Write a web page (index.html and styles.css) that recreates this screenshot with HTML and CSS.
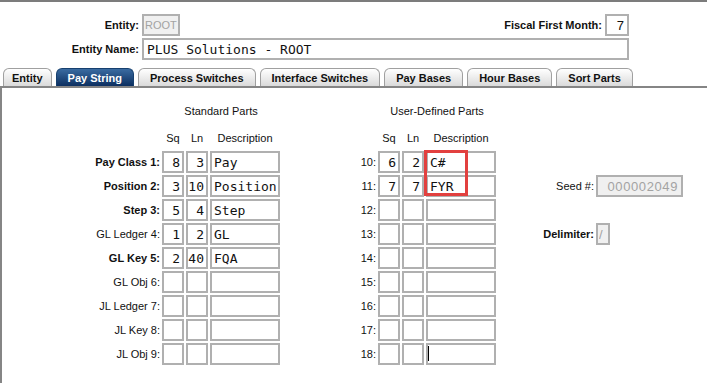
FILE: index.html
```html
<!DOCTYPE html>
<html lang="en">
<head>
    <meta charset="UTF-8">
    <title>Entity - Pay String</title>
    <link rel="stylesheet" href="styles.css">
</head>
<body>
    <!-- Entity header -->
    <div class="top">
        <div class="top-row">
            <label class="top-label">Entity:</label>
            <input type="text" class="entity-code" value="ROOT" disabled>
            <div class="fiscal">
                <label class="top-label">Fiscal First Month:</label>
                <input type="text" class="fiscal-month" value="7">
            </div>
        </div>
        <div class="top-row">
            <label class="top-label">Entity Name:</label>
            <input type="text" class="entity-name" value="PLUS Solutions - ROOT">
        </div>
    </div>

    <!-- Tabs -->
    <ul class="tabs">
        <li class="tab">Entity</li>
        <li class="tab active">Pay String</li>
        <li class="tab">Process Switches</li>
        <li class="tab">Interface Switches</li>
        <li class="tab">Pay Bases</li>
        <li class="tab">Hour Bases</li>
        <li class="tab">Sort Parts</li>
    </ul>

    <div class="panel">
        <!-- Standard parts -->
        <div class="parts standard">
            <div class="title">Standard Parts</div>
            <div class="head sq">Sq</div>
            <div class="head ln">Ln</div>
            <div class="head desc">Description</div>

            <label class="lbl bold">Pay Class 1:</label>
            <input class="sq" value="8"><input class="ln" value="3"><input class="desc" value="Pay">
            <label class="lbl bold">Position 2:</label>
            <input class="sq" value="3"><input class="ln" value="10"><input class="desc" value="Position">
            <label class="lbl bold">Step 3:</label>
            <input class="sq" value="5"><input class="ln" value="4"><input class="desc" value="Step">
            <label class="lbl">GL Ledger 4:</label>
            <input class="sq" value="1"><input class="ln" value="2"><input class="desc" value="GL">
            <label class="lbl bold">GL Key 5:</label>
            <input class="sq" value="2"><input class="ln" value="40"><input class="desc" value="FQA">
            <label class="lbl">GL Obj 6:</label>
            <input class="sq"><input class="ln"><input class="desc">
            <label class="lbl">JL Ledger 7:</label>
            <input class="sq"><input class="ln"><input class="desc">
            <label class="lbl">JL Key 8:</label>
            <input class="sq"><input class="ln"><input class="desc">
            <label class="lbl">JL Obj 9:</label>
            <input class="sq"><input class="ln"><input class="desc">
        </div>

        <!-- User-defined parts -->
        <div class="parts user">
            <div class="title">User-Defined Parts</div>
            <div class="head sq">Sq</div>
            <div class="head ln">Ln</div>
            <div class="head desc">Description</div>

            <label class="lbl">10:</label>
            <input class="sq" value="6"><input class="ln" value="2"><input class="desc" value="C#">
            <label class="lbl">11:</label>
            <input class="sq" value="7"><input class="ln" value="7"><input class="desc" value="FYR">
            <label class="lbl">12:</label>
            <input class="sq"><input class="ln"><input class="desc">
            <label class="lbl">13:</label>
            <input class="sq"><input class="ln"><input class="desc">
            <label class="lbl">14:</label>
            <input class="sq"><input class="ln"><input class="desc">
            <label class="lbl">15:</label>
            <input class="sq"><input class="ln"><input class="desc">
            <label class="lbl">16:</label>
            <input class="sq"><input class="ln"><input class="desc">
            <label class="lbl">17:</label>
            <input class="sq"><input class="ln"><input class="desc">
            <label class="lbl">18:</label>
            <input class="sq"><input class="ln"><input class="desc">

            <label class="side-label seed-label">Seed #:</label>
            <input class="seed" value="000002049" disabled>
            <label class="side-label delim-label bold">Delimiter:</label>
            <input class="delim" value="/" disabled>

            <div class="highlight"></div>
            <span class="caret"></span>
        </div>
    </div>
</body>
</html>
```

FILE: styles.css
```css
/* Base */
body {
    margin: 0;
    font-family: 'Liberation Sans', Arial, sans-serif;
    font-size: 11px;
    color: #111;
    background-color: #ffffff;
    border-top: 2px solid #7c7c7c;
}

input {
    box-sizing: border-box;
    height: 22px;
    margin: 0;
    padding: 0 3px;
    border: 2px solid #b0b0b0;
    background-color: #ffffff;
    font-family: 'DejaVu Sans Mono', monospace;
    font-size: 13px;
    color: #111;
    outline: none;
}

input:disabled {
    background-color: #f0f0f0;
    color: #a3a3a3;
    font-family: 'Liberation Sans', Arial, sans-serif;
}

.bold {
    font-weight: bold;
}

/* Entity header */
.top {
    width: 629px;
    padding-top: 12px;
}

.top-row {
    display: flex;
    align-items: center;
    gap: 3px;
    margin-bottom: 2px;
}

.top-label {
    font-weight: bold;
    color: #111;
}

.top-row > .top-label {
    width: 139px;
    text-align: right;
}

.entity-code {
    width: 38px;
    padding: 0 1px;
    font-size: 11px;
}

.fiscal {
    display: flex;
    align-items: center;
    gap: 3px;
    margin-left: auto;
}

.fiscal-month {
    width: 24px;
    text-align: right;
    font-family: 'Liberation Sans', Arial, sans-serif;
}

.entity-name {
    width: 487px;
}

/* Tabs */
.tabs {
    display: flex;
    gap: 4px;
    margin: 8px 0 0;
    padding: 0 0 0 3px;
    list-style: none;
    border-bottom: 2px solid #858585;
}

.tab {
    height: 18px;
    line-height: 18px;
    padding: 0 11px;
    border: 1px solid #a0a0a0;
    border-bottom: none;
    border-radius: 6px 6px 0 0;
    background: linear-gradient(#ffffff, #dadada);
    font-weight: bold;
    color: #111;
    box-sizing: border-box;
}

.tab:first-child {
    padding: 0 8px;
}

.tab.active {
    border-color: #17406f;
    background: linear-gradient(#3a6ba1, #0c2f60);
    color: #ffffff;
}

/* Pay string panel */
.panel {
    display: flex;
    gap: 60px;
    padding: 15px 0 20px 58px;
    border-left: 2px solid #858585;
}

.parts {
    display: grid;
    grid-template-rows: repeat(11, 22px);
    gap: 2px;
    align-items: center;
}

.standard {
    grid-template-columns: 100px 22px 22px 70px;
}

.user {
    position: relative;
    grid-template-columns: 36px 22px 22px 70px 96px 87px;
}

.title {
    grid-column: 2 / span 3;
    align-self: start;
    line-height: 16px;
    text-align: center;
}

.head {
    text-align: center;
}

.lbl {
    grid-column: 1;
    text-align: right;
}

.sq {
    grid-column: 2;
    text-align: right;
}

.ln {
    grid-column: 3;
    text-align: right;
}

.desc {
    grid-column: 4;
    padding: 0 2px;
}

.head.sq,
.head.ln,
.head.desc {
    text-align: center;
    padding: 0;
}

input.sq,
input.ln {
    width: 22px;
    padding: 0 2px 0 0;
}

input.desc {
    width: 70px;
}

.side-label {
    grid-column: 5;
    text-align: right;
}

.seed-label {
    grid-row: 4;
}

.delim-label {
    grid-row: 6;
}

.seed {
    grid-column: 6;
    grid-row: 4;
    width: 87px;
    text-align: right;
    font-size: 13px;
    letter-spacing: 0.6px;
}

.delim {
    grid-column: 6;
    grid-row: 6;
    width: 14px;
    padding: 0 1px;
    font-size: 13px;
}

/* Annotation box and text cursor */
.highlight {
    position: absolute;
    left: 84px;
    top: 47px;
    width: 44px;
    height: 46px;
    box-sizing: border-box;
    border: 3px solid #e2403f;
    pointer-events: none;
}

.caret {
    position: absolute;
    left: 88px;
    top: 243px;
    width: 1px;
    height: 15px;
    background-color: #000;
}
```
